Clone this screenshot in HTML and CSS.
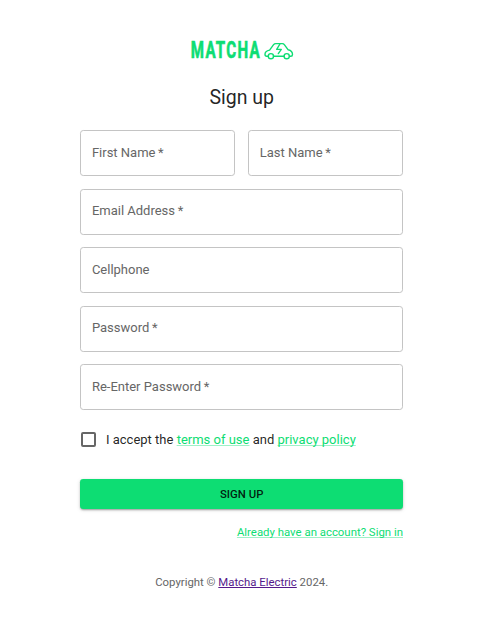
FILE: index.html
```html
<!DOCTYPE html>
<html lang="en">
<head>
    <meta charset="utf-8">
    <title>Sign up</title>
    <link rel="stylesheet" href="styles.css">
</head>
<body>
    <div class="container">
        <svg class="logo" width="103" height="24" viewBox="0 0 103 24">
            <text class="logo-text" x="0.8" y="20.4" textLength="70" lengthAdjust="spacingAndGlyphs">MATCHA</text>
            <g class="logo-car">
                <path d="M78.3 18.3h-1.6c-1.3 0-1.7-.8-1.7-2 0-2.6 1.2-3.6 4.6-4.2l4-5.4c.6-.8 1.2-1.1 2.2-1.1h6.5c1 0 1.6.4 2.2 1.2l3.7 5c3.1.7 4.3 2 4.3 4.7 0 1.3-.6 1.8-1.7 1.8h-1.2M83.5 18.3h10.5"/>
                <circle cx="80.9" cy="18.2" r="2.6"/>
                <circle cx="96.7" cy="18.2" r="2.6"/>
                <path d="M89.9 6l-3.2 5.4h4.6l-3 4.2"/>
            </g>
        </svg>
        <h1>Sign up</h1>
        <form>
            <div class="fields">
                <input class="half" type="text" placeholder="First Name&thinsp;*">
                <input class="half" type="text" placeholder="Last Name&thinsp;*">
                <input type="text" placeholder="Email Address&thinsp;*">
                <input type="text" placeholder="Cellphone">
                <input type="password" placeholder="Password&thinsp;*">
                <input type="password" placeholder="Re-Enter Password&thinsp;*">
            </div>
            <label class="accept">
                <input type="checkbox">
                <span>I accept the <a href="#">terms of use</a> and <a href="#">privacy policy</a></span>
            </label>
            <button type="button">Sign Up</button>
            <div class="signin"><a href="#">Already have an account? Sign in</a></div>
        </form>
        <p class="copyright">Copyright © <a href="#">Matcha Electric</a> 2024.</p>
    </div>
</body>
</html>
```
FILE: styles.css
```css
* {
    box-sizing: border-box;
}
body {
    margin: 0;
    background-color: #fff;
    color: rgba(0, 0, 0, 0.87);
    font-family: Roboto, Arial, sans-serif;
    font-size: 13px;
}
.container {
    display: flex;
    flex-direction: column;
    align-items: center;
    width: 322.6px;
    margin-left: 80.4px;
    padding-top: 38px;
}
.logo {
    display: block;
    overflow: visible;
}
.logo-text {
    font-size: 24px;
    font-weight: 700;
    letter-spacing: 2px;
    fill: #0ddd73;
    stroke: #0ddd73;
    stroke-width: 0.7;
}
.logo-car {
    fill: none;
    stroke: #0ddd73;
    stroke-width: 1.4;
    stroke-linecap: round;
    stroke-linejoin: round;
}
h1 {
    margin: 23px 0 19px;
    font-size: 19.5px;
    font-weight: 400;
    line-height: 26px;
}
form {
    width: 100%;
}
.fields {
    display: grid;
    grid-template-columns: 1fr 1fr;
    gap: 12.5px 13px;
}
.fields input {
    grid-column: span 2;
    width: 100%;
    min-width: 0;
    height: 46px;
    padding: 0 10.5px 2px;
    border: 1px solid #c4c4c4;
    border-radius: 3.25px;
    background-color: #fff;
    font: inherit;
}
.fields .half {
    grid-column: span 1;
}
.fields input::placeholder {
    color: #666;
    opacity: 1;
}
.accept {
    display: flex;
    align-items: center;
    height: 34px;
    margin-top: 12.5px;
}
.accept input {
    appearance: none;
    width: 15px;
    height: 15px;
    margin: 0 10px 0 0.6px;
    border: 2px solid #666;
    border-radius: 2px;
}
.accept a,
.signin a {
    color: #0ddd73;
    text-decoration-color: rgba(13, 221, 115, 0.4);
    text-decoration-skip-ink: none;
}
button {
    display: block;
    width: 100%;
    height: 30px;
    margin-top: 22.5px;
    padding-bottom: 2px;
    border: none;
    border-radius: 3.25px;
    background-color: #0ddd73;
    box-shadow: 0 2px 2px -1px rgba(0, 0, 0, 0.2), 0 1px 2px rgba(0, 0, 0, 0.16), 0 1px 4px rgba(0, 0, 0, 0.12);
    color: rgba(0, 0, 0, 0.87);
    font-family: inherit;
    font-size: 11.375px;
    font-weight: 500;
    text-transform: uppercase;
    cursor: pointer;
}
.signin {
    margin-top: 15px;
    font-size: 11.4px;
    line-height: 16px;
    text-align: right;
}
.copyright {
    margin: 34px 0 0;
    color: #666;
    font-size: 11.375px;
    line-height: 16px;
}
.copyright a {
    color: #551a8b;
}
```
